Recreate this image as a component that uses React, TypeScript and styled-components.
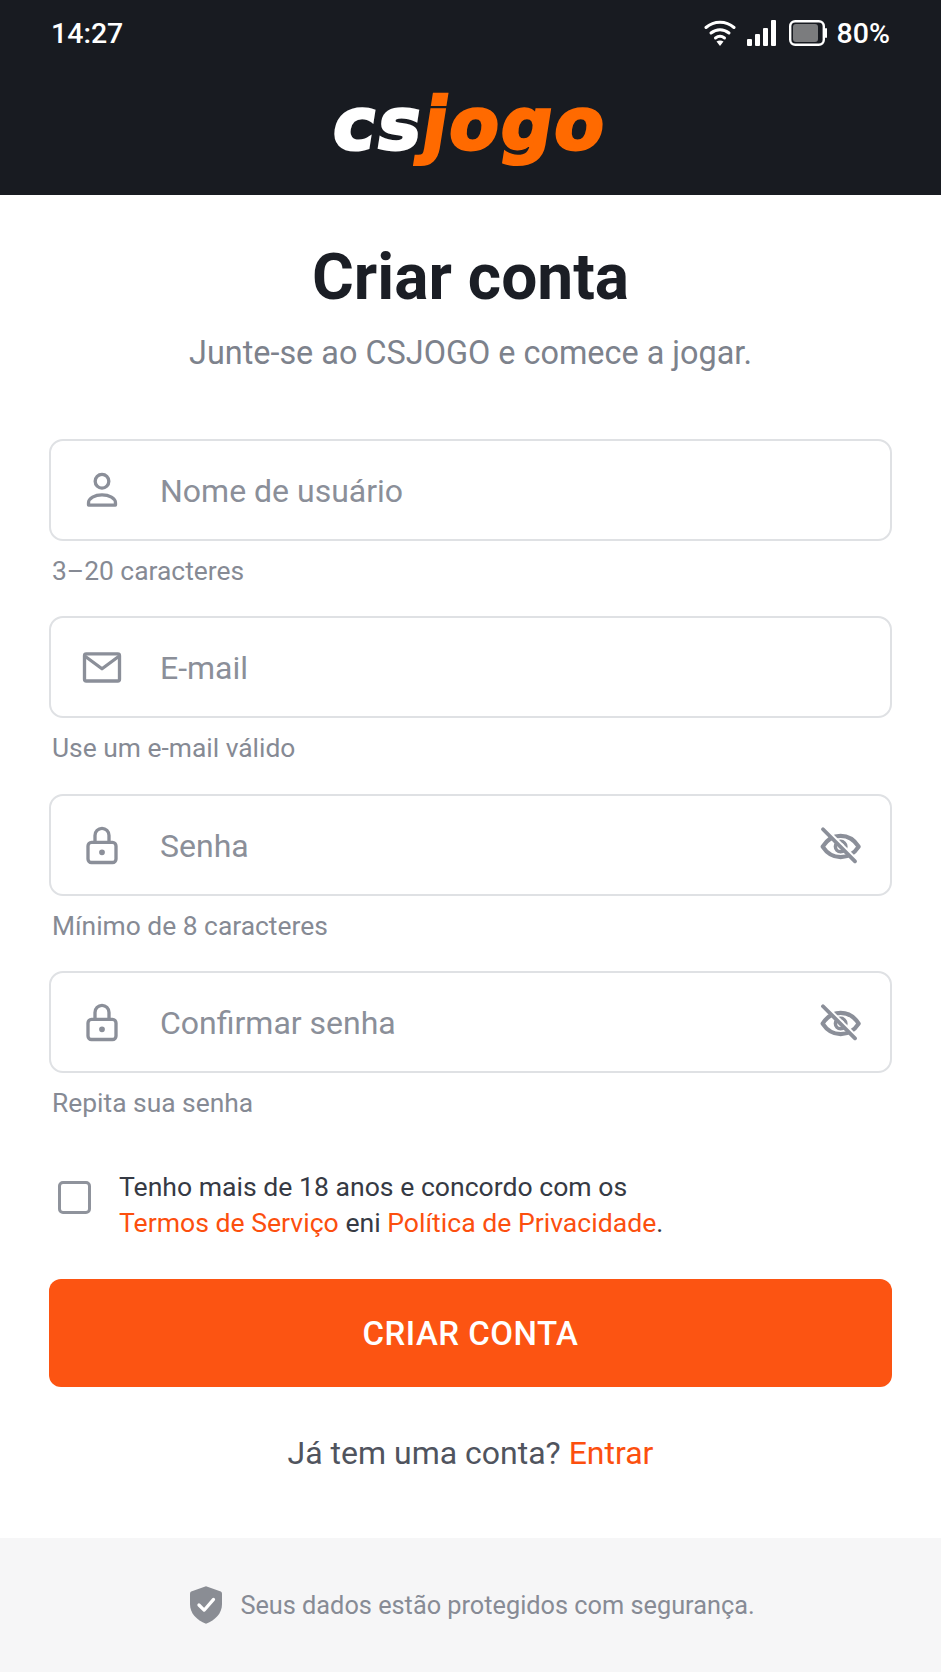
import styled, { createGlobalStyle } from 'styled-components';
import type { ReactNode } from 'react';

const GlobalStyle = createGlobalStyle`
  html, body {
    margin: 0;
    padding: 0;
    background: #fff;
  }
  * { box-sizing: border-box; }
  body { font-family: Roboto, "Liberation Sans", sans-serif; }
`;

const Page = styled.div`
  width: 941px;
  height: 1672px;
  display: flex;
  flex-direction: column;
  overflow: hidden;
`;

const Header = styled.header`
  height: 195px;
  background: #181b21;
  padding: 0 51px;
  display: flex;
  flex-direction: column;
`;

const StatusBar = styled.div`
  height: 66px;
  display: flex;
  align-items: center;
  justify-content: space-between;
  color: #fff;
  font-size: 28.5px;
  font-weight: 500;
`;

const StatusIcons = styled.div`
  display: flex;
  align-items: center;
  gap: 10px;
`;

const LogoRow = styled.div`
  flex: 1;
  display: flex;
  justify-content: center;
  padding-top: 15px;
`;

const Logo = styled.div`
  font-family: "DejaVu Sans", sans-serif;
  font-weight: 700;
  font-size: 72px;
  line-height: 86px;
  height: 86px;
  transform: skewX(-9deg);
  -webkit-text-stroke: 3px currentColor;
  letter-spacing: 2px;
`;

const LogoPart = styled.span<{ $accent?: boolean }>`
  color: ${p => (p.$accent ? '#ff6a00' : '#ffffff')};
`;

const Main = styled.main`
  flex: 1;
  padding: 0 49px;
  display: flex;
  flex-direction: column;
`;

const Title = styled.h1`
  margin: 44px 0 0;
  text-align: center;
  font-size: 64px;
  line-height: 78px;
  font-weight: 700;
  color: #1b1e25;
`;

const Subtitle = styled.p`
  margin: 16px 0 0;
  text-align: center;
  font-size: 32.4px;
  line-height: 40px;
  color: #7d828c;
`;

const Form = styled.form`
  margin-top: 66px;
  display: flex;
  flex-direction: column;
  gap: 29.4px;
`;

const Field = styled.div`
  display: flex;
  flex-direction: column;
`;

const InputBox = styled.div`
  height: 102px;
  border: 2px solid #dfe1e4;
  border-radius: 14px;
  background: #fff;
  display: flex;
  align-items: center;
  padding: 0 28px 0 30px;
`;

const IconSlot = styled.span`
  width: 42px;
  height: 42px;
  display: flex;
  align-items: center;
  justify-content: center;
  color: #8b8f99;
  flex: none;
`;

const Placeholder = styled.span`
  flex: 1;
  margin-left: 37px;
  padding-top: 2px;
  font-size: 32px;
  color: #8b8f99;
`;

const Helper = styled.div`
  margin: 14px 0 0 3px;
  font-size: 26.4px;
  line-height: 32px;
  color: #868a94;
`;

const Agreement = styled.div`
  margin-top: 50px;
  display: flex;
  gap: 28px;
  padding-left: 9px;
`;

const Checkbox = styled.span`
  flex: none;
  margin-top: 12px;
  width: 33px;
  height: 33px;
  border: 3px solid #8f939c;
  border-radius: 5px;
  background: #fff;
`;

const AgreementText = styled.div`
  font-size: 26.6px;
  line-height: 36px;
  color: #363a44;
`;

const TextLink = styled.a`
  color: #fc4f0e;
  text-decoration: none;
`;

const SubmitButton = styled.button`
  margin-top: 38px;
  height: 108px;
  width: 100%;
  border: 0;
  border-radius: 12px;
  background: #fc5412;
  color: #fff;
  font-family: inherit;
  font-size: 33px;
  font-weight: 500;
  letter-spacing: 0.5px;
`;

const LoginLine = styled.p`
  margin: 45px 0 0;
  text-align: center;
  font-size: 32px;
  line-height: 42px;
  color: #50545e;
`;

const Footer = styled.footer`
  height: 134px;
  background: #f6f6f7;
  padding-left: 4px;
  display: flex;
  align-items: center;
  justify-content: center;
  gap: 18px;
  font-size: 25.3px;
  color: #878b95;
`;

const Stroke = ({ children, size }: { children: ReactNode; size: number }) => (
  <svg width={size} height={size} viewBox="0 0 24 24" fill="none" stroke="currentColor" strokeWidth="1.9" strokeLinecap="round" strokeLinejoin="round">
    {children}
  </svg>
);

const UserIcon = () => (
  <Stroke size={42}>
    <circle cx="12" cy="7" r="3.9" />
    <path d="M4.300 20.600v-1.200c0-2.700 3.600-4.600 7.700-4.600s7.700 1.900 7.700 4.600v1.200z" />
  </Stroke>
);

const MailIcon = () => (
  <Stroke size={48}>
    <rect x="2" y="4.500" width="20" height="15.500" rx="1" />
    <path d="M2.500 6l9.500 7 9.500-7" />
  </Stroke>
);

const LockIcon = () => (
  <Stroke size={44}>
    <rect x="4" y="10.500" width="16" height="11.500" rx="2" />
    <path d="M8 10.500V6.500a4 4 0 0 1 8 0v4" />
    <circle cx="12" cy="16.200" r=".7" fill="currentColor" />
  </Stroke>
);

const EyeOffIcon = () => (
  <Stroke size={42}>
    <path d="M1.500 12.900C4.300 8.600 7.600 6.800 11.800 6.800s7.500 1.800 10.300 6.100c-2.800 4.300-6.100 6-10.300 6s-7.500-1.700-10.300-6z" strokeWidth="2.400" />
    <circle cx="11.800" cy="12.900" r="3" strokeWidth="2" />
    <path d="M2.800 2.200l18.400 18.400" stroke="#fff" strokeWidth="1.600" strokeLinecap="butt" />
    <path d="M1.700 3L20 21.300" strokeWidth="2.200" />
  </Stroke>
);

const ShieldIcon = () => (
  <svg width="32" height="40" viewBox="0 0 34 40">
    <path d="M17 0l15 5.500c1 .4 2 1 2 2.500v11C34 29 27 36 17 40 7 36 0 29 0 19V8c0-1.500 1-2.100 2-2.500z" fill="#8a8d94" />
    <path d="M9.500 20l5.500 5.500L25 14" fill="none" stroke="#fff" strokeWidth="3.400" strokeLinecap="round" strokeLinejoin="round" />
  </svg>
);

const WifiIcon = () => (
  <svg width="33" height="28" viewBox="0 0 33 28" fill="none" stroke="#fff" strokeWidth="3" strokeLinecap="round">
    <path d="M2 8.500C10 1.500 22 1.500 30 8.500" />
    <path d="M7 14c5.500-4.500 12.500-4.500 18 0" />
    <path d="M11.500 19c3-2.300 6-2.300 9 0" />
    <path d="M16 27l-3.500-4.500c2-1.500 5-1.500 7 0z" fill="#fff" stroke="none" />
  </svg>
);

const SignalIcon = () => (
  <svg width="32" height="26" viewBox="0 0 32 26" fill="#fff">
    <rect x="0" y="19" width="5" height="7" rx="1" />
    <rect x="8" y="14" width="5" height="12" rx="1" />
    <rect x="16" y="8" width="5" height="18" rx="1" />
    <rect x="24" y="0" width="5" height="26" rx="1" />
  </svg>
);

const BatteryIcon = () => (
  <svg width="38" height="26" viewBox="0 0 38 26" fill="none">
    <rect x="1.200" y="1.200" width="33.600" height="23.600" rx="5" stroke="#fff" strokeWidth="2.400" />
    <rect x="4" y="4" width="25" height="18" rx="3" fill="#7b7c7e" />
    <path d="M37 9v8" stroke="#fff" strokeWidth="2" strokeLinecap="round" />
  </svg>
);

type FieldSpec = { icon: ReactNode; label: string; help: string; eye?: boolean };

const fields: FieldSpec[] = [
  { icon: <UserIcon />, label: 'Nome de usuário', help: '3–20 caracteres' },
  { icon: <MailIcon />, label: 'E-mail', help: 'Use um e-mail válido' },
  { icon: <LockIcon />, label: 'Senha', help: 'Mínimo de 8 caracteres', eye: true },
  { icon: <LockIcon />, label: 'Confirmar senha', help: 'Repita sua senha', eye: true },
];

const App = () => (
  <>
    <GlobalStyle />
    <Page>
      <Header>
        <StatusBar>
          <span>14:27</span>
          <StatusIcons>
            <WifiIcon />
            <SignalIcon />
            <BatteryIcon />
            <span>80%</span>
          </StatusIcons>
        </StatusBar>
        <LogoRow>
          <Logo>
            <LogoPart>cs</LogoPart>
            <LogoPart $accent>jogo</LogoPart>
          </Logo>
        </LogoRow>
      </Header>
      <Main>
        <Title>Criar conta</Title>
        <Subtitle>Junte-se ao CSJOGO e comece a jogar.</Subtitle>
        <Form>
          {fields.map(f => (
            <Field key={f.label}>
              <InputBox>
                <IconSlot>{f.icon}</IconSlot>
                <Placeholder>{f.label}</Placeholder>
                {f.eye && (
                  <IconSlot>
                    <EyeOffIcon />
                  </IconSlot>
                )}
              </InputBox>
              <Helper>{f.help}</Helper>
            </Field>
          ))}
        </Form>
        <Agreement>
          <Checkbox />
          <AgreementText>
            Tenho mais de 18 anos e concordo com os
            <br />
            <TextLink>Termos de Serviço</TextLink> eni <TextLink>Política de Privacidade</TextLink>.
          </AgreementText>
        </Agreement>
        <SubmitButton type="button">CRIAR CONTA</SubmitButton>
        <LoginLine>
          Já tem uma conta? <TextLink>Entrar</TextLink>
        </LoginLine>
      </Main>
      <Footer>
        <ShieldIcon />
        <span>Seus dados estão protegidos com segurança.</span>
      </Footer>
    </Page>
  </>
);

export default App;
